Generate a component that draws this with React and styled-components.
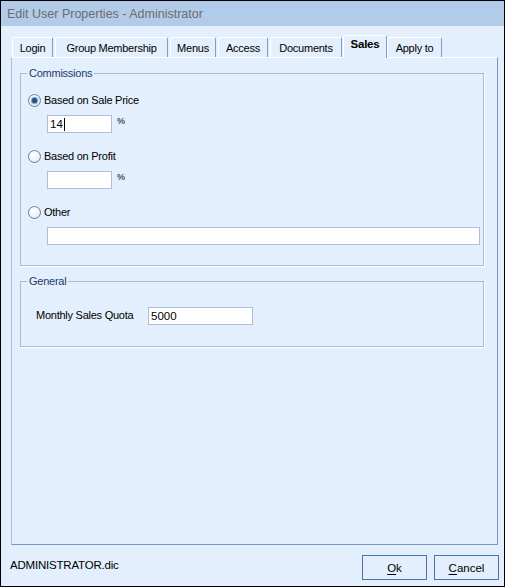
import React from 'react';
import styled, { createGlobalStyle } from 'styled-components';

const GlobalStyle = createGlobalStyle`
  html, body {
    margin: 0;
    padding: 0;
    background: #ffffff;
  }
  * {
    box-sizing: border-box;
  }
`

const Window = styled.div`
  width: 505px;
  height: 587px;
  border: 1px solid #000;
  background: #e3effc;
  display: flex;
  flex-direction: column;
  font-family: 'Liberation Sans', Arial, sans-serif;
  font-size: 11px;
  letter-spacing: -0.25px;
  color: #000;
`

const TitleBar = styled.div`
  height: 25px;
  flex: none;
  background: #b1cbe9;
  color: #6d6d6d;
  font-size: 12.5px;
  letter-spacing: 0;
  display: flex;
  align-items: center;
  padding-left: 6px;
`

const Body = styled.div`
  flex: none;
  padding: 9px 6px 0 10px;
  display: flex;
  flex-direction: column;
`

const TabStrip = styled.div`
  height: 22px;
  display: flex;
  align-items: flex-end;
  margin-left: 1px;
`

const Tab = styled.div`
  width: ${p => p.w}px;
  height: ${p => (p.active ? 23 : 20)}px;
  margin-left: ${p => p.ml}px;
  border-top: 1px solid #ffffff;
  border-left: 1px solid #ffffff;
  border-right: 1px solid #7b9cc6;
  border-top-left-radius: 2px;
  border-top-right-radius: 2px;
  display: flex;
  justify-content: center;
  padding-top: ${p => (p.active ? 2 : 4)}px;
  font-size: ${p => (p.active ? 11.5 : 11)}px;
  font-weight: ${p => (p.active ? 'bold' : 'normal')};
  background: #e3effc;
  position: relative;
  z-index: ${p => (p.active ? 2 : 1)};
  margin-bottom: ${p => (p.active ? -1 : 0)}px;
`

const Panel = styled.div`
  width: 487px;
  height: 488px;
  border-top: 1px solid #ffffff;
  border-left: 1px solid #a9c0da;
  border-right: 1px solid #7698c4;
  border-bottom: 1px solid #7698c4;
  padding: 8px 0 0 8px;
`

const Group = styled.fieldset`
  width: 464px;
  margin: ${p => p.mt}px 0 0 0;
  padding: 0;
  border: 1px solid #a6bdd8;
  box-shadow: 1px 1px 0 #ffffff;
  min-width: 0;
`

const Legend = styled.legend`
  margin-left: 6px;
  padding: 0 2px;
  line-height: 14px;
  color: #1c3c6c;
`

const GroupContent = styled.div`
  padding: ${p => p.pad};
  display: flex;
  flex-direction: column;
`

const RadioRow = styled.div`
  height: 16px;
  display: flex;
  align-items: center;
  gap: 3px;
  margin-top: ${p => p.mt || 0}px;
`

const RadioCircle = styled.span`
  width: 13px;
  height: 13px;
  border-radius: 50%;
  border: 1px solid #62809f;
  background: radial-gradient(circle at 40% 40%, #ffffff 0%, #f2f5f8 50%, #d4dde6 100%);
  display: flex;
  align-items: center;
  justify-content: center;
  flex: none;
  &::after {
    content: '';
    width: 5px;
    height: 5px;
    border-radius: 50%;
    background: ${p => (p.checked ? '#24508c' : 'transparent')};
    box-shadow: ${p => (p.checked ? '0 0 1px 1px #6d94c6' : 'none')};
  }
`

const FieldRow = styled.div`
  display: flex;
  align-items: flex-start;
  margin-top: 7px;
  margin-left: 19px;
`

const Field = styled.div`
  width: ${p => p.w}px;
  height: 18px;
  flex: none;
  border: 1px solid #a9bfd9;
  background: #ffffff;
  padding: 0 2px;
  display: flex;
  align-items: center;
  font-size: 11.5px;
  letter-spacing: 0;
`

const Caret = styled.span`
  display: inline-block;
  width: 1px;
  height: 13px;
  background: #000;
  margin-left: 1px;
`

const Pct = styled.span`
  font-size: 9px;
  margin-left: 5px;
  margin-top: 1px;
`

const QuotaRow = styled.div`
  display: flex;
  align-items: center;
`

const QuotaLabel = styled.span`
  width: 127px;
  flex: none;
  white-space: nowrap;
  padding-left: 15px;
  margin-top: -2px;
`

const BottomBar = styled.div`
  flex: none;
  height: 40px;
  display: flex;
  justify-content: space-between;
  padding: 10px 5px 0 9px;
`

const StatusText = styled.span`
  margin-top: 4px;
  font-size: 11.5px;
  letter-spacing: -0.2px;
`

const Buttons = styled.div`
  display: flex;
  gap: 7px;
`

const Button = styled.div`
  width: 65px;
  height: 25px;
  border: 1px solid #4b74a8;
  display: flex;
  align-items: center;
  justify-content: center;
  font-size: 11.5px;
  letter-spacing: 0;
  & u {
    text-decoration: underline;
    text-underline-offset: 2px;
  }
`

const tabs = [
  { label: 'Login', w: 41, ml: 0 },
  { label: 'Group Membership', w: 113, ml: 2 },
  { label: 'Menus', w: 46, ml: 2 },
  { label: 'Access', w: 50, ml: 2 },
  { label: 'Documents', w: 72, ml: 2 },
  { label: 'Sales', w: 44, ml: 1, active: true },
  { label: 'Apply to', w: 55, ml: 0 },
];

function App() {
  return (
    <>
      <GlobalStyle />
      <Window>
        <TitleBar>Edit User Properties - Administrator</TitleBar>
        <Body>
          <TabStrip>
            {tabs.map(t => (
              <Tab key={t.label} w={t.w} ml={t.ml} active={t.active}>{t.label}</Tab>
            ))}
          </TabStrip>
          <Panel>
            <Group mt={0}>
              <Legend>Commissions</Legend>
              <GroupContent pad="12px 0 20px 7px">
                <RadioRow>
                  <RadioCircle checked />
                  <span>Based on Sale Price</span>
                </RadioRow>
                <FieldRow>
                  <Field w={65}>14<Caret /></Field>
                  <Pct>%</Pct>
                </FieldRow>
                <RadioRow mt={15}>
                  <RadioCircle />
                  <span>Based on Profit</span>
                </RadioRow>
                <FieldRow>
                  <Field w={65} />
                  <Pct>%</Pct>
                </FieldRow>
                <RadioRow mt={15}>
                  <RadioCircle />
                  <span>Other</span>
                </RadioRow>
                <FieldRow>
                  <Field w={433} />
                </FieldRow>
              </GroupContent>
            </Group>
            <Group mt={8}>
              <Legend>General</Legend>
              <GroupContent pad="19px 0 21px 0">
                <QuotaRow>
                  <QuotaLabel>Monthly Sales Quota</QuotaLabel>
                  <Field w={105}>5000</Field>
                </QuotaRow>
              </GroupContent>
            </Group>
          </Panel>
        </Body>
        <BottomBar>
          <StatusText>ADMINISTRATOR.dic</StatusText>
          <Buttons>
            <Button><span><u>O</u>k</span></Button>
            <Button><span><u>C</u>ancel</span></Button>
          </Buttons>
        </BottomBar>
      </Window>
    </>
  );
}

export default App;
